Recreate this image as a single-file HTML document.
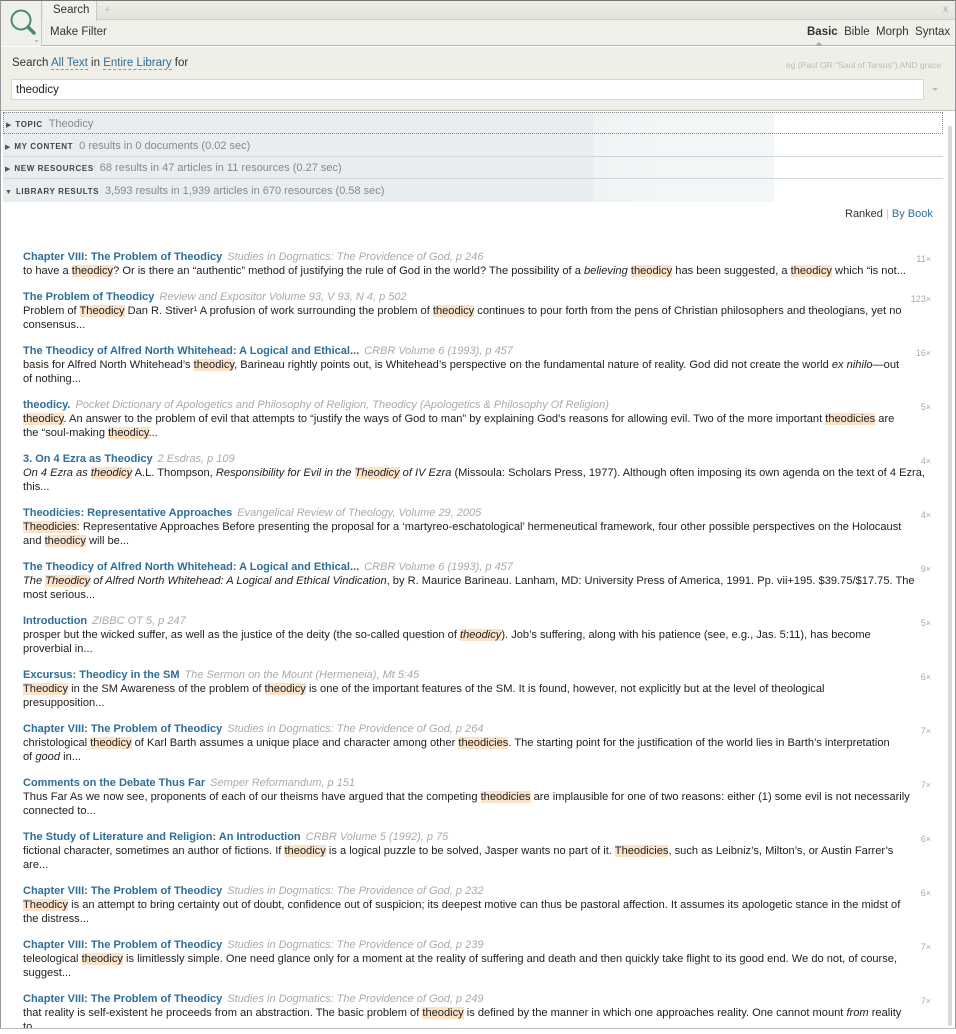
<!DOCTYPE html><html><head><meta charset="utf-8"><style>
*{margin:0;padding:0;box-sizing:border-box}
body{width:956px;height:1032px;overflow:hidden;background:#fff;font-family:"Liberation Sans",sans-serif;color:#222;position:relative}
.abs{position:absolute}
.frame{left:0;top:0;width:956px;height:1032px;border:1px solid #999;border-top:1px solid #777}
.top{left:1px;top:1px;width:954px;height:19px;background:linear-gradient(#eeeee6,#e3e3da);border-bottom:1px solid #d0d0c6}
.tab{left:43px;top:1px;width:54px;height:20px;background:#f2f2ec;border-right:1px solid #c8c8c0;font-size:11.5px;padding:3px 0 0 10px;color:#333}
.bar{left:1px;top:20px;width:954px;height:26px;background:#f0f0ea;border-bottom:1px solid #b5b5ac}
.icon{left:1px;top:1px;width:41px;height:45px;background:#f0f0ea;border-right:1px solid #c8c8c0}
.sarea{left:1px;top:47px;width:954px;height:64px;background:#efefe8;border-bottom:1px solid #c0c0b8}
.inp{left:11px;top:79px;width:913px;height:21px;background:#fff;border:1px solid #d8d8d0;font-size:11.5px;padding:4px 0 0 4px}
.sec{left:3px;width:940px;height:22px;font-size:11px;color:#888;padding-top:5px;border-bottom:1px solid #cfd6d8}
.sec b{font-size:8px;letter-spacing:.6px;color:#444;margin:0 6px 0 4px;font-weight:bold}
.sec i{font-style:normal;font-size:7px;color:#555;margin-left:2px}
.bg{left:3px;top:112px;width:771px;height:90px;background:linear-gradient(90deg,#e8eef0 0,#e8eef0 590px,#eff3f4 590px,#f3f6f7 660px,#f3f6f7 771px)}
.r{left:23px;width:912px;font-size:11.1px;line-height:14px}
.t{color:#2e6e98;font-weight:bold;white-space:nowrap;font-size:11px}
.t span{color:#aaa;font-weight:normal;font-style:italic;margin-left:5px}
.l{white-space:nowrap;overflow:hidden}
.h{background:#fae3c9}
.n{position:absolute;right:4px;top:2px;font-size:9px;color:#aaa}
a{color:#2e6e98;text-decoration:none}
</style></head><body>
<div class="abs frame"></div>
<div class="abs top"></div>
<div class="abs bar"></div>
<div class="abs tab">Search</div>
<div class="abs" style="left:104px;top:4px;font-size:11px;color:#bbb">+</div>
<div class="abs" style="left:943px;top:4px;font-size:10px;color:#aaa">x</div>
<div class="abs icon"><svg width="41" height="45"><circle cx="20" cy="19" r="9.5" fill="none" stroke="#4a8a74" stroke-width="2"/><line x1="27" y1="26" x2="33" y2="32" stroke="#4a8a74" stroke-width="3.5" stroke-linecap="round"/><path d="M34 39l3 0-1.5 2z" fill="#999"/></svg></div>
<div class="abs" style="left:50px;top:26px;font-size:11.5px;color:#333">Make Filter</div>
<div class="abs" style="left:807px;top:26px;font-size:11.5px;color:#333"><b>Basic</b> &nbsp;Bible &nbsp;Morph &nbsp;Syntax</div>
<div class="abs" style="left:815px;top:42px;width:0;height:0;border-left:4px solid transparent;border-right:4px solid transparent;border-bottom:4px solid #aaa"></div>
<div class="abs sarea"></div>
<div class="abs" style="left:12px;top:57px;font-size:11.5px;color:#333">Search <a style="border-bottom:1px dashed #6aa">All Text</a> in <a style="border-bottom:1px dashed #6aa">Entire Library</a> for</div>
<div class="abs" style="left:786px;top:60px;font-size:8.5px;color:#bbb">eg (Paul OR "Saul of Tarsus") AND grace</div>
<div class="abs inp">theodicy</div>
<div class="abs" style="left:932px;top:88px;border-left:3px solid transparent;border-right:3px solid transparent;border-top:3px solid #bbb"></div>
<div class="abs bg"></div>
<div class="abs sec" style="top:112px;border:1px dotted #888"><i>▶</i><b>TOPIC</b>Theodicy</div>
<div class="abs sec" style="top:135px"><i>▶</i><b>MY CONTENT</b>0 results in 0 documents (0.02 sec)</div>
<div class="abs sec" style="top:157px"><i>▶</i><b>NEW RESOURCES</b>68 results in 47 articles in 11 resources (0.27 sec)</div>
<div class="abs sec" style="top:180px;border:none"><i>▼</i><b>LIBRARY RESULTS</b>3,593 results in 1,939 articles in 670 resources (0.58 sec)</div>
<div class="abs" style="left:945px;top:113px;width:10px;height:915px;background:#fff"></div>
<div class="abs" style="left:948px;top:126px;width:4px;height:900px;background:#d8d8d2;border-radius:2px"></div>
<div class="abs" style="left:845px;top:208px;font-size:11px;color:#333">Ranked <span style="color:#ccc">|</span> <a>By Book</a></div>

<div class="abs r" style="top:250px"><div class="n">11×</div><div class="t">Chapter VIII: The Problem of Theodicy<span>Studies in Dogmatics: The Providence of God, p 246</span></div><div class="l">to have a <span class="h">theodicy</span>? Or is there an “authentic” method of justifying the rule of God in the world? The possibility of a <i>believing</i> <span class="h">theodicy</span> has been suggested, a <span class="h">theodicy</span> which “is not...</div></div>
<div class="abs r" style="top:290px"><div class="n">123×</div><div class="t">The Problem of Theodicy<span>Review and Expositor Volume 93, V 93, N 4, p 502</span></div><div class="l">Problem of <span class="h">Theodicy</span> Dan R. Stiver¹ A profusion of work surrounding the problem of <span class="h">theodicy</span> continues to pour forth from the pens of Christian philosophers and theologians, yet no</div><div class="l">consensus...</div></div>
<div class="abs r" style="top:344px"><div class="n">16×</div><div class="t">The Theodicy of Alfred North Whitehead: A Logical and Ethical...<span>CRBR Volume 6 (1993), p 457</span></div><div class="l">basis for Alfred North Whitehead’s <span class="h">theodicy</span>, Barineau rightly points out, is Whitehead’s perspective on the fundamental nature of reality. God did not create the world <i>ex nihilo</i>—out</div><div class="l">of nothing...</div></div>
<div class="abs r" style="top:398px"><div class="n">5×</div><div class="t">theodicy.<span>Pocket Dictionary of Apologetics and Philosophy of Religion, Theodicy (Apologetics &amp; Philosophy Of Religion)</span></div><div class="l"><span class="h">theodicy</span>. An answer to the problem of evil that attempts to “justify the ways of God to man” by explaining God’s reasons for allowing evil. Two of the more important <span class="h">theodicies</span> are</div><div class="l">the “soul-making <span class="h">theodicy</span>...</div></div>
<div class="abs r" style="top:452px"><div class="n">4×</div><div class="t">3. On 4 Ezra as Theodicy<span>2 Esdras, p 109</span></div><div class="l"><i>On 4 Ezra as <span class="h">theodicy</span></i> A.L. Thompson, <i>Responsibility for Evil in the <span class="h">Theodicy</span> of IV Ezra</i> (Missoula: Scholars Press, 1977). Although often imposing its own agenda on the text of 4 Ezra,</div><div class="l">this...</div></div>
<div class="abs r" style="top:506px"><div class="n">4×</div><div class="t">Theodicies: Representative Approaches<span>Evangelical Review of Theology, Volume 29, 2005</span></div><div class="l"><span class="h">Theodicies</span>: Representative Approaches Before presenting the proposal for a ‘martyreo-eschatological’ hermeneutical framework, four other possible perspectives on the Holocaust</div><div class="l">and <span class="h">theodicy</span> will be...</div></div>
<div class="abs r" style="top:560px"><div class="n">9×</div><div class="t">The Theodicy of Alfred North Whitehead: A Logical and Ethical...<span>CRBR Volume 6 (1993), p 457</span></div><div class="l"><i>The <span class="h">Theodicy</span> of Alfred North Whitehead: A Logical and Ethical Vindication</i>, by R. Maurice Barineau. Lanham, MD: University Press of America, 1991. Pp. vii+195. $39.75/$17.75. The</div><div class="l">most serious...</div></div>
<div class="abs r" style="top:614px"><div class="n">5×</div><div class="t">Introduction<span>ZIBBC OT 5, p 247</span></div><div class="l">prosper but the wicked suffer, as well as the justice of the deity (the so-called question of <i class="h">theodicy</i>). Job’s suffering, along with his patience (see, e.g., Jas. 5:11), has become</div><div class="l">proverbial in...</div></div>
<div class="abs r" style="top:668px"><div class="n">6×</div><div class="t">Excursus: Theodicy in the SM<span>The Sermon on the Mount (Hermeneia), Mt 5:45</span></div><div class="l"><span class="h">Theodicy</span> in the SM Awareness of the problem of <span class="h">theodicy</span> is one of the important features of the SM. It is found, however, not explicitly but at the level of theological</div><div class="l">presupposition...</div></div>
<div class="abs r" style="top:722px"><div class="n">7×</div><div class="t">Chapter VIII: The Problem of Theodicy<span>Studies in Dogmatics: The Providence of God, p 264</span></div><div class="l">christological <span class="h">theodicy</span> of Karl Barth assumes a unique place and character among other <span class="h">theodicies</span>. The starting point for the justification of the world lies in Barth’s interpretation</div><div class="l">of <i>good</i> in...</div></div>
<div class="abs r" style="top:776px"><div class="n">7×</div><div class="t">Comments on the Debate Thus Far<span>Semper Reformandum, p 151</span></div><div class="l">Thus Far As we now see, proponents of each of our theisms have argued that the competing <span class="h">theodicies</span> are implausible for one of two reasons: either (1) some evil is not necessarily</div><div class="l">connected to...</div></div>
<div class="abs r" style="top:830px"><div class="n">6×</div><div class="t">The Study of Literature and Religion: An Introduction<span>CRBR Volume 5 (1992), p 75</span></div><div class="l">fictional character, sometimes an author of fictions. If <span class="h">theodicy</span> is a logical puzzle to be solved, Jasper wants no part of it. <span class="h">Theodicies</span>, such as Leibniz’s, Milton’s, or Austin Farrer’s</div><div class="l">are...</div></div>
<div class="abs r" style="top:884px"><div class="n">6×</div><div class="t">Chapter VIII: The Problem of Theodicy<span>Studies in Dogmatics: The Providence of God, p 232</span></div><div class="l"><span class="h">Theodicy</span> is an attempt to bring certainty out of doubt, confidence out of suspicion; its deepest motive can thus be pastoral affection. It assumes its apologetic stance in the midst of</div><div class="l">the distress...</div></div>
<div class="abs r" style="top:938px"><div class="n">7×</div><div class="t">Chapter VIII: The Problem of Theodicy<span>Studies in Dogmatics: The Providence of God, p 239</span></div><div class="l">teleological <span class="h">theodicy</span> is limitlessly simple. One need glance only for a moment at the reality of suffering and death and then quickly take flight to its good end. We do not, of course,</div><div class="l">suggest...</div></div>
<div class="abs r" style="top:992px"><div class="n">7×</div><div class="t">Chapter VIII: The Problem of Theodicy<span>Studies in Dogmatics: The Providence of God, p 249</span></div><div class="l">that reality is self-existent he proceeds from an abstraction. The basic problem of <span class="h">theodicy</span> is defined by the manner in which one approaches reality. One cannot mount <i>from</i> reality</div><div class="l">to...</div></div>
<div class="abs" style="left:0;top:1028px;width:956px;height:4px;background:#fff;border-top:1px solid #bbb"></div>
</body></html>
